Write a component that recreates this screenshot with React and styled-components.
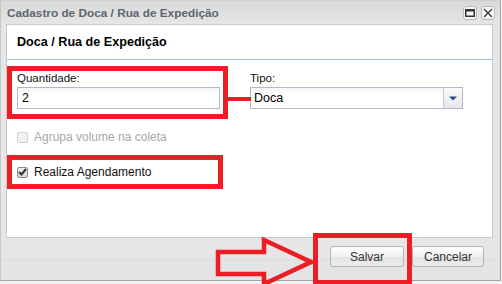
import React from "react";
import styled, { createGlobalStyle } from "styled-components";

const GlobalStyle = createGlobalStyle`
  html, body {
    margin: 0;
    padding: 0;
    background: #f2f2f2;
  }
  * { box-sizing: border-box; }
`;

const Stage = styled.div`
  position: relative;
  width: 502px;
  height: 284px;
  overflow: hidden;
  font-family: "Liberation Sans", Arial, sans-serif;
`;

const Window = styled.div`
  width: 501px;
  height: 281px;
  display: flex;
  flex-direction: column;
  background: linear-gradient(#d9d9d9, #e6e6e6 24px, #e6e6e6);
  border: 1px solid #c8c8c8;
  border-right-color: #a4a4a4;
  border-bottom-color: #a4a4a4;
  border-top-color: #d0d0d0;
`;

const TitleBar = styled.div`
  height: 23px;
  flex: none;
  display: flex;
  align-items: center;
  padding: 0 5px 0 6px;
  font-size: 11.8px;
  font-weight: bold;
  color: #5d6670;
`;

const Title = styled.span`
  flex: 1;
`;

const Tool = styled.span`
  width: 14px;
  height: 14px;
  margin-left: 4px;
  display: flex;
  align-items: center;
  justify-content: center;
  background: #f6f6f6;
  border: 1px solid #b8b8b8;
  border-radius: 3px;
`;

const Panel = styled.div`
  margin: 0 7px 0 5px;
  height: 214px;
  flex: none;
  background: #fff;
  border: 1px solid #c9c9c9;
  display: flex;
  flex-direction: column;
`;

const PanelHeader = styled.div`
  height: 35px;
  padding: 0 10px;
  display: flex;
  align-items: center;
  border-bottom: 1px solid #9fbfe6;
  font-size: 12.6px;
  font-weight: bold;
  color: #000;
`;

const Form = styled.div`
  padding: 10px 29px 0 10px;
  display: flex;
  flex-direction: column;
`;

const FieldRow = styled.div`
  display: flex;
  gap: 30px;
`;

const Field = styled.div`
  width: ${(p) => p.$width}px;
  display: flex;
  flex-direction: column;
`;

const Label = styled.label`
  font-size: 11.5px;
  line-height: 16px;
  height: 17px;
  color: #111;
`;

const Input = styled.div`
  height: 22px;
  border: 1px solid #b5b8c8;
  background: linear-gradient(#f4f4f4, #fff 6px);
  display: flex;
  align-items: center;
  padding: 0 4px;
  font-size: 12.5px;
  color: #000;
`;

const Select = styled(Input)`
  padding: 0 0 0 3px;
  justify-content: space-between;
`;

const Trigger = styled.span`
  width: 19px;
  height: 100%;
  border-left: 1px solid #c6c9d6;
  background: linear-gradient(#fafafa, #e8e8e8);
  display: flex;
  align-items: center;
  justify-content: center;
`;

const CheckRow = styled.div`
  display: flex;
  align-items: center;
  gap: 6px;
  height: 18px;
  margin-top: ${(p) => p.$top}px;
  font-size: 12px;
  color: ${(p) => (p.$disabled ? "#a8a8a8" : "#111")};
`;

const Box = styled.span`
  width: 11px;
  height: 11px;
  border: 1px solid ${(p) => (p.$disabled ? "#d2d2d2" : "#8a8a8a")};
  border-radius: 2px;
  background: ${(p) => (p.$disabled ? "#f3f3f3" : "linear-gradient(#f0f0f0, #d6d6d6)")};
  display: flex;
  align-items: center;
  justify-content: center;
`;

const Footer = styled.div`
  flex: 1;
  display: flex;
  justify-content: flex-end;
  align-items: flex-start;
  gap: 8px;
  padding: 8px 16px 0 0;
  background: linear-gradient(#e6e6e6 21px, #dcdcdc 22px, #e4e4e4 23px);
`;

const Button = styled.button`
  width: ${(p) => p.$width}px;
  height: 21px;
  padding: 0;
  border: 1px solid #b3b3b3;
  border-radius: 3px;
  background: linear-gradient(#fdfdfd, #f1f1f1 50%, #e2e2e2 51%, #ececec);
  font-family: "Liberation Sans", Arial, sans-serif;
  font-size: 12px;
  color: #333;
`;

const Mark = styled.div`
  position: absolute;
  left: ${(p) => p.$x}px;
  top: ${(p) => p.$y}px;
  width: ${(p) => p.$w}px;
  height: ${(p) => p.$h}px;
  border: 5px solid #ee1c25;
  pointer-events: none;
`;

const Connector = styled.div`
  position: absolute;
  left: 226px;
  top: 97px;
  width: 25px;
  height: 4px;
  background: #ee1c25;
`;

const Arrow = styled.svg`
  position: absolute;
  left: 214px;
  top: 236px;
`;

export default function App() {
  return (
    <>
      <GlobalStyle />
      <Stage>
        <Window>
          <TitleBar>
            <Title>Cadastro de Doca / Rua de Expedição</Title>
            <Tool>
              <svg width="10" height="8" viewBox="0 0 10 8">
                <rect x="0.75" y="0.75" width="8.5" height="6.5" fill="none" stroke="#333" strokeWidth="1.5" />
                <rect x="0.5" y="0.5" width="9" height="2" fill="#333" />
              </svg>
            </Tool>
            <Tool>
              <svg width="10" height="10" viewBox="0 0 10 10">
                <path d="M1 1 L9 9 M9 1 L1 9" stroke="#333" strokeWidth="1.3" />
              </svg>
            </Tool>
          </TitleBar>
          <Panel>
            <PanelHeader>Doca / Rua de Expedição</PanelHeader>
            <Form>
              <FieldRow>
                <Field $width={203}>
                  <Label>Quantidade:</Label>
                  <Input>2</Input>
                </Field>
                <Field $width={213}>
                  <Label>Tipo:</Label>
                  <Select>
                    <span>Doca</span>
                    <Trigger>
                      <svg width="8" height="5" viewBox="0 0 8 5">
                        <path d="M0 0.5 H8 L4 4.5 Z" fill="#2f4a7a" />
                      </svg>
                    </Trigger>
                  </Select>
                </Field>
              </FieldRow>
              <CheckRow $top={19} $disabled>
                <Box $disabled />
                Agrupa volume na coleta
              </CheckRow>
              <CheckRow $top={17}>
                <Box>
                  <svg width="9" height="8" viewBox="0 0 9 8">
                    <path d="M1 4 L3.5 6.5 L8 1" fill="none" stroke="#333" strokeWidth="2" />
                  </svg>
                </Box>
                Realiza Agendamento
              </CheckRow>
            </Form>
          </Panel>
          <Footer>
            <Button $width={74}>Salvar</Button>
            <Button $width={72}>Cancelar</Button>
          </Footer>
        </Window>

        <Mark $x={7} $y={66} $w={221} $h={53} />
        <Connector />
        <Mark $x={7} $y={155} $w={216} $h={34} />
        <Mark $x={313} $y={233} $w={99} $h={52} />
        <Arrow width="102" height="52" viewBox="0 0 102 52">
          <path
            d="M4 16 H50 V4 L97 26 L50 48 V38 H4 Z"
            fill="none"
            stroke="#ee1c25"
            strokeWidth="4.5"
            strokeLinejoin="miter"
          />
        </Arrow>
      </Stage>
    </>
  );
}
